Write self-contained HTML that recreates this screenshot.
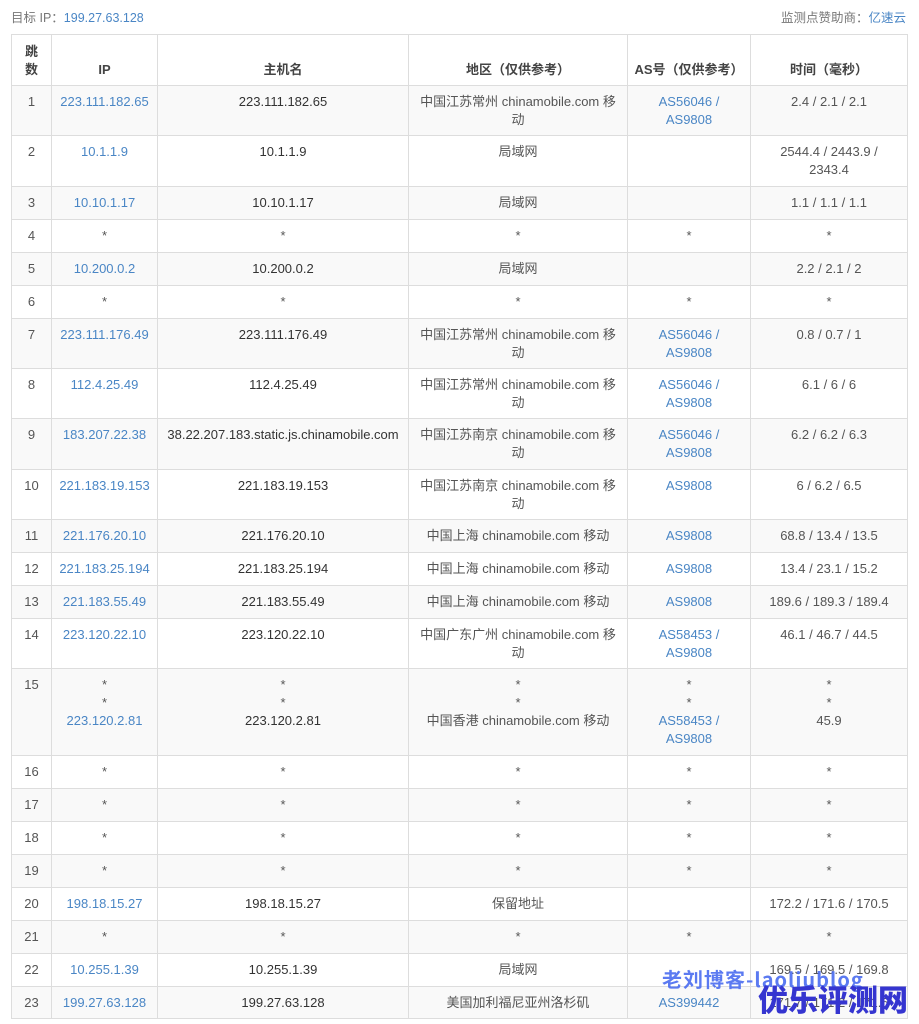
<!DOCTYPE html>
<html><head><meta charset="utf-8"><style>
body{margin:0;background:#fff;font-family:"Liberation Sans","Noto Sans CJK SC",sans-serif;font-size:13px;color:#555;width:919px;height:1024px;overflow:hidden;position:relative}
.top{position:absolute;top:9px;left:11px;right:13px;height:18px;line-height:18px;font-size:12.5px;color:#777}
.top .r{position:absolute;right:0;top:0}
.l{color:#4a86c5}
table{position:absolute;top:34px;left:11px;border-collapse:collapse;table-layout:fixed;width:896px}
td,th{border:1px solid #ddd;text-align:center;vertical-align:top;padding:7px 2px 0;line-height:18px;box-sizing:border-box;overflow:hidden}
th{vertical-align:bottom;padding-bottom:6px;font-weight:bold;color:#444}
th.j{vertical-align:top;padding-top:8px}
tr:nth-child(odd) td{background:#f9f9f9}
.h{color:#333}
.w1{position:absolute;left:662px;top:965px;font-size:20px;font-weight:bold;color:#4a6cf0;font-family:"Noto Sans CJK SC",sans-serif;opacity:.9;letter-spacing:1px;line-height:28px}
.w2{position:absolute;left:758px;top:978px;font-size:30px;font-weight:900;color:#3535d0;font-family:"Noto Sans CJK SC",sans-serif;line-height:40px}
</style></head><body>
<div class="top">目标 IP：<span class="l">199.27.63.128</span><span class="r">监测点赞助商：<span class="l">亿速云</span></span></div>
<table>
<colgroup><col style="width:40px"><col style="width:106px"><col style="width:251px"><col style="width:219px"><col style="width:123px"><col style="width:157px"></colgroup>
<thead><tr style="height:51px"><th class="j">跳<br>数</th><th>IP</th><th>主机名</th><th>地区（仅供参考）</th><th>AS号（仅供参考）</th><th>时间（毫秒）</th></tr></thead>
<tbody>
<tr style="height:50px"><td>1</td><td class="l">223.111.182.65</td><td class="h">223.111.182.65</td><td>中国江苏常州 chinamobile.com 移<br>动</td><td class="l">AS56046 /<br>AS9808</td><td>2.4 / 2.1 / 2.1</td></tr>
<tr style="height:51px"><td>2</td><td class="l">10.1.1.9</td><td class="h">10.1.1.9</td><td>局域网</td><td></td><td>2544.4 / 2443.9 /<br>2343.4</td></tr>
<tr style="height:33px"><td>3</td><td class="l">10.10.1.17</td><td class="h">10.10.1.17</td><td>局域网</td><td></td><td>1.1 / 1.1 / 1.1</td></tr>
<tr style="height:33px"><td>4</td><td>*</td><td>*</td><td>*</td><td>*</td><td>*</td></tr>
<tr style="height:33px"><td>5</td><td class="l">10.200.0.2</td><td class="h">10.200.0.2</td><td>局域网</td><td></td><td>2.2 / 2.1 / 2</td></tr>
<tr style="height:33px"><td>6</td><td>*</td><td>*</td><td>*</td><td>*</td><td>*</td></tr>
<tr style="height:50px"><td>7</td><td class="l">223.111.176.49</td><td class="h">223.111.176.49</td><td>中国江苏常州 chinamobile.com 移<br>动</td><td class="l">AS56046 /<br>AS9808</td><td>0.8 / 0.7 / 1</td></tr>
<tr style="height:50px"><td>8</td><td class="l">112.4.25.49</td><td class="h">112.4.25.49</td><td>中国江苏常州 chinamobile.com 移<br>动</td><td class="l">AS56046 /<br>AS9808</td><td>6.1 / 6 / 6</td></tr>
<tr style="height:51px"><td>9</td><td class="l">183.207.22.38</td><td class="h" style="white-space:nowrap;padding:7px 0 0">38.22.207.183.static.js.chinamobile.com</td><td>中国江苏南京 chinamobile.com 移<br>动</td><td class="l">AS56046 /<br>AS9808</td><td>6.2 / 6.2 / 6.3</td></tr>
<tr style="height:50px"><td>10</td><td class="l">221.183.19.153</td><td class="h">221.183.19.153</td><td>中国江苏南京 chinamobile.com 移<br>动</td><td class="l">AS9808</td><td>6 / 6.2 / 6.5</td></tr>
<tr style="height:33px"><td>11</td><td class="l">221.176.20.10</td><td class="h">221.176.20.10</td><td>中国上海 chinamobile.com 移动</td><td class="l">AS9808</td><td>68.8 / 13.4 / 13.5</td></tr>
<tr style="height:33px"><td>12</td><td class="l">221.183.25.194</td><td class="h">221.183.25.194</td><td>中国上海 chinamobile.com 移动</td><td class="l">AS9808</td><td>13.4 / 23.1 / 15.2</td></tr>
<tr style="height:33px"><td>13</td><td class="l">221.183.55.49</td><td class="h">221.183.55.49</td><td>中国上海 chinamobile.com 移动</td><td class="l">AS9808</td><td>189.6 / 189.3 / 189.4</td></tr>
<tr style="height:50px"><td>14</td><td class="l">223.120.22.10</td><td class="h">223.120.22.10</td><td>中国广东广州 chinamobile.com 移<br>动</td><td class="l">AS58453 /<br>AS9808</td><td>46.1 / 46.7 / 44.5</td></tr>
<tr style="height:87px"><td>15</td><td>*<br>*<br><span class="l">223.120.2.81</span></td><td>*<br>*<br><span class="h">223.120.2.81</span></td><td>*<br>*<br>中国香港 chinamobile.com 移动</td><td>*<br>*<br><span class="l">AS58453 /<br>AS9808</span></td><td>*<br>*<br>45.9</td></tr>
<tr style="height:33px"><td>16</td><td>*</td><td>*</td><td>*</td><td>*</td><td>*</td></tr>
<tr style="height:33px"><td>17</td><td>*</td><td>*</td><td>*</td><td>*</td><td>*</td></tr>
<tr style="height:33px"><td>18</td><td>*</td><td>*</td><td>*</td><td>*</td><td>*</td></tr>
<tr style="height:33px"><td>19</td><td>*</td><td>*</td><td>*</td><td>*</td><td>*</td></tr>
<tr style="height:33px"><td>20</td><td class="l">198.18.15.27</td><td class="h">198.18.15.27</td><td>保留地址</td><td></td><td>172.2 / 171.6 / 170.5</td></tr>
<tr style="height:33px"><td>21</td><td>*</td><td>*</td><td>*</td><td>*</td><td>*</td></tr>
<tr style="height:33px"><td>22</td><td class="l">10.255.1.39</td><td class="h">10.255.1.39</td><td>局域网</td><td></td><td>169.5 / 169.5 / 169.8</td></tr>
<tr style="height:32px"><td>23</td><td class="l">199.27.63.128</td><td class="h">199.27.63.128</td><td>美国加利福尼亚州洛杉矶</td><td class="l">AS399442</td><td>171.7 / 171.2 / 171.5</td></tr>
</tbody></table>
<div class="w1">老刘博客-laoliublog</div>
<div class="w2">优乐评测网</div>
</body></html>
